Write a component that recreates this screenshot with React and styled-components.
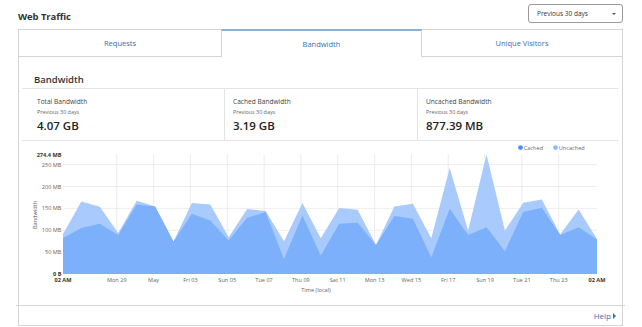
import React from "react";
import styled, { createGlobalStyle } from "styled-components";

const GlobalStyle = createGlobalStyle`
  html, body {
    margin: 0;
    padding: 0;
    background: #fff;
  }
  body {
    font-family: "Open Sans", "Noto Sans", sans-serif;
    color: #333;
  }
`;

const Page = styled.div`
  width: 642px;
  height: 327px;
  box-sizing: border-box;
  padding: 4px 19px 0 18px;
`;

const TopBar = styled.div`
  display: flex;
  align-items: center;
  justify-content: space-between;
  height: 25px;
`;

const Title = styled.h2`
  margin: 0;
  font-size: 9.5px;
  font-weight: 700;
  color: #333;
  letter-spacing: -0.1px;
`;

const Select = styled.div`
  display: flex;
  align-items: center;
  justify-content: space-between;
  box-sizing: border-box;
  width: 95px;
  height: 19px;
  margin-bottom: 6px;
  padding: 0 6px 0 8px;
  border: 1px solid #9a9a9a;
  border-radius: 3px;
  font-size: 6.5px;
  color: #333;
`;

const Caret = styled.span`
  width: 0;
  height: 0;
  border-left: 2.5px solid transparent;
  border-right: 2.5px solid transparent;
  border-top: 2.5px solid #555;
`;

const Card = styled.div`
  box-sizing: border-box;
  height: 297px;
  border: 1px solid #d4d4d4;
  border-top: none;
  display: flex;
  flex-direction: column;
`;

const Tabs = styled.div`
  display: grid;
  grid-template-columns: 202px 201px 1fr;
  height: 28px;
`;

const Tab = styled.div`
  display: flex;
  align-items: center;
  justify-content: center;
  box-sizing: border-box;
  font-size: 7.5px;
  color: #3a6fb3;
  border-top: ${(p) => (p.$active ? "2px solid #8cb0d8" : "1px solid #d4d4d4")};
  border-bottom: ${(p) => (p.$active ? "none" : "1px solid #d4d4d4")};
  border-left: ${(p) => (p.$active ? "1px solid #d4d4d4" : "none")};
  border-right: ${(p) => (p.$active ? "1px solid #d4d4d4" : "none")};
  padding-bottom: ${(p) => (p.$active ? "1px" : "0")};
`;

const Body = styled.div`
  flex: 1;
  padding: 0 3px;
  display: flex;
  flex-direction: column;
`;

const Heading = styled.h3`
  margin: 0;
  height: 31px;
  box-sizing: border-box;
  padding: 0 0 2px 12px;
  display: flex;
  align-items: flex-end;
  font-size: 9.5px;
  font-weight: 600;
  color: #333;
`;

const Stats = styled.div`
  display: grid;
  grid-template-columns: 202px 193px 1fr;
  height: 53px;
  box-sizing: border-box;
  border-top: 1px solid #e4e4e4;
  border-bottom: 1px solid #e4e4e4;
`;

const Stat = styled.div`
  padding: ${(p) => (p.$first ? "8px 0 0 15px" : "8px 0 0 8px")};
  border-left: ${(p) => (p.$first ? "none" : "1px solid #e4e4e4")};
  display: flex;
  flex-direction: column;
`;

const StatLabel = styled.div`
  font-size: 6.6px;
  color: #444;
  line-height: 9px;
`;

const StatSub = styled.div`
  font-size: 5.4px;
  color: #666;
  line-height: 9px;
  margin-top: 2px;
`;

const StatValue = styled.div`
  font-size: 11.5px;
  font-weight: 600;
  color: #222;
  line-height: 15px;
  margin-top: 1px;
`;

const ChartBox = styled.div`
  height: 164px;
`;

const Footer = styled.div`
  display: flex;
  align-items: center;
  justify-content: flex-end;
  height: 19px;
  margin: 0 -3px;
  padding-right: 9px;
  border-top: 1px solid #d4d4d4;
`;

const HelpLink = styled.a`
  display: flex;
  align-items: center;
  gap: 2px;
  font-size: 8px;
  color: #3a6fb3;
  text-decoration: none;
`;

const HelpArrow = styled.span`
  width: 0;
  height: 0;
  border-top: 3px solid transparent;
  border-bottom: 3px solid transparent;
  border-left: 3.5px solid #3a6fb3;
`;

const cached = [82.6, 105.5, 114.7, 89.5, 159, 154.4, 74.1, 137.6, 122.3, 76.4, 128.5, 141.5, 34.4, 133.7, 42, 114.7, 117, 66.5, 132.4, 126.2, 38.3, 149.1, 89.5, 107.1, 52.1, 141.5, 151.4, 89.5, 107.1, 78.7];
const total = [91.7, 165.9, 153.7, 94, 167.5, 154.4, 74.1, 162.2, 159, 84.2, 148.4, 143.8, 75, 162.2, 81.9, 150.7, 146.8, 66.5, 154.4, 160.6, 81.9, 242.5, 99.3, 273, 99.3, 162.9, 170.4, 90.2, 147.5, 80.3];

const X0 = 63;
const X1 = 597;
const Y0 = 275;
const MAX = 274.4;
const PLOT_H = 120;

const xAt = (i) => X0 + (i * (X1 - X0)) / (total.length - 1);
const yAt = (v) => Y0 - (v / MAX) * PLOT_H;

const areaPath = (values) =>
  `M${X0},${Y0} ` +
  values.map((v, i) => `L${xAt(i).toFixed(1)},${yAt(v).toFixed(1)}`).join(" ") +
  ` L${X1},${Y0} Z`;

const dayLabels = ["Mon 29", "May", "Fri 03", "Sun 05", "Tue 07", "Thu 09", "Sat 11", "Mon 13", "Wed 15", "Fri 17", "Sun 19", "Tue 21", "Thu 23"];
const step = (X1 - X0) / (total.length - 1);
const dayX = (k) => X0 + step * (2.92 + 2 * k);

const tick = { fontSize: 5.6, fill: "#666", fontFamily: "Open Sans, sans-serif" };
const tickBold = { ...tick, fill: "#333", fontWeight: 700 };

function BandwidthChart() {
  return (
    <svg width="597" height="164" viewBox="22 142 597 164">
      {[50, 100, 150, 200, 250].map((v) => (
        <line key={v} x1={X0} x2={X1} y1={yAt(v)} y2={yAt(v)} stroke="#e8e8e8" strokeWidth="0.8" />
      ))}
      {dayLabels.map((d, k) => (
        <line key={d} x1={dayX(k)} x2={dayX(k)} y1={155} y2={Y0} stroke="#e8e8e8" strokeWidth="0.8" />
      ))}
      <path d={areaPath(total)} fill="#a9cafc" />
      <path d={areaPath(cached)} fill="#7db0fb" />

      <text x="61.5" y="157.5" textAnchor="end" style={tickBold}>274.4 MB</text>
      {[50, 100, 150, 200, 250].map((v) => (
        <text key={v} x="61.5" y={yAt(v) + 2} textAnchor="end" style={tick}>{v} MB</text>
      ))}
      <text x="61.5" y="276.5" textAnchor="end" style={tickBold}>0 B</text>
      <text x="36.5" y="216" textAnchor="middle" transform="rotate(-90 36.5 216)" style={tick}>Bandwidth</text>

      <text x={X0} y="283" textAnchor="middle" style={tickBold}>02 AM</text>
      {dayLabels.map((d, k) => (
        <text key={d} x={dayX(k)} y="283" textAnchor="middle" style={tick}>{d}</text>
      ))}
      <text x={X1} y="283" textAnchor="middle" style={tickBold}>02 AM</text>
      <text x="316" y="293" textAnchor="middle" style={tick}>Time (local)</text>

      <circle cx="520.5" cy="148.6" r="2.4" fill="#4a8ff3" />
      <text x="523.8" y="150.6" style={tick}>Cached</text>
      <circle cx="555.5" cy="148.6" r="2.4" fill="#8db9f7" />
      <text x="558.8" y="150.6" style={tick}>Uncached</text>
    </svg>
  );
}

const stats = [
  { label: "Total Bandwidth", value: "4.07 GB" },
  { label: "Cached Bandwidth", value: "3.19 GB" },
  { label: "Uncached Bandwidth", value: "877.39 MB" },
];

export default function App() {
  return (
    <Page>
      <GlobalStyle />
      <TopBar>
        <Title>Web Traffic</Title>
        <Select>
          <span>Previous 30 days</span>
          <Caret />
        </Select>
      </TopBar>
      <Card>
        <Tabs>
          <Tab>Requests</Tab>
          <Tab $active>Bandwidth</Tab>
          <Tab>Unique Visitors</Tab>
        </Tabs>
        <Body>
          <Heading>Bandwidth</Heading>
          <Stats>
            {stats.map((s, i) => (
              <Stat key={s.label} $first={i === 0}>
                <StatLabel>{s.label}</StatLabel>
                <StatSub>Previous 30 days</StatSub>
                <StatValue>{s.value}</StatValue>
              </Stat>
            ))}
          </Stats>
          <ChartBox>
            <BandwidthChart />
          </ChartBox>
        </Body>
        <Footer>
          <HelpLink href="#">
            Help
            <HelpArrow />
          </HelpLink>
        </Footer>
      </Card>
    </Page>
  );
}
